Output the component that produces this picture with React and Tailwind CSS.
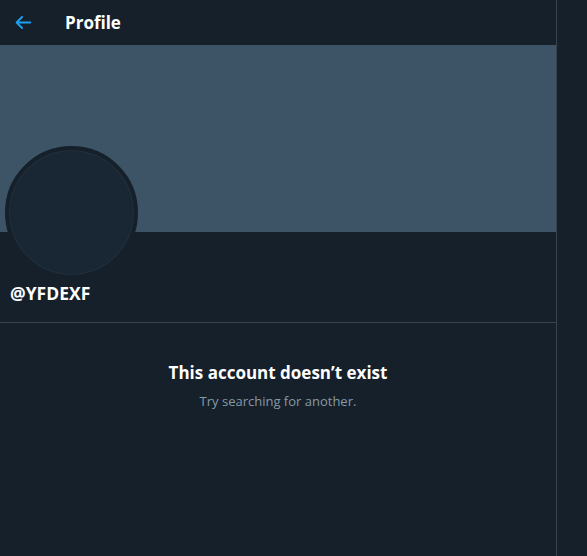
export default function App() {
  return (
    <div className="flex h-[556px] w-[587px] overflow-hidden bg-[#15202b]" style={{ fontFamily: '"Open Sans", "Noto Sans", sans-serif' }}>
      <div className="flex w-[557px] shrink-0 flex-col border-r border-[#38444d]">
        <div className="flex h-[45px] items-center">
          <div className="ml-[12px] flex w-[22px] items-center justify-center">
            <svg viewBox="0 0 24 24" className="h-[23px] w-[23px] fill-[#1da1f2]">
              <path d="M20 11H7.414l4.293-4.293c.39-.39.39-1.023 0-1.414s-1.023-.39-1.414 0l-6 6c-.39.39-.39 1.023 0 1.414l6 6c.195.195.45.293.707.293s.512-.098.707-.293c.39-.39.39-1.023 0-1.414L7.414 13H20c.553 0 1-.447 1-1s-.447-1-1-1z" />
            </svg>
          </div>
          <div className="ml-[31px] text-[17px] font-bold leading-none text-white">Profile</div>
        </div>
        <div className="h-[187px] bg-[#3d5466]" />
        <div className="px-[5px]">
          <div className="mt-[-86px] h-[133px] w-[133px] rounded-full border-[4px] border-[#15202b] bg-[#192734] shadow-[inset_0_0_0_1px_#22303c]" />
        </div>
        <div className="mt-[2px] px-[10px] text-[17.5px] font-bold leading-[24px] text-white">@YFDEXF</div>
        <div className="mt-[17px] border-b border-[#38444d]" />
        <div className="mt-[38px] flex flex-col items-center">
          <div className="text-[17px] font-bold leading-[24px] text-white">This account doesn’t exist</div>
          <div className="mt-[7px] text-[13px] leading-[18px] text-[#8899a6]">Try searching for another.</div>
        </div>
      </div>
      <div className="flex-1" />
    </div>
  );
}
